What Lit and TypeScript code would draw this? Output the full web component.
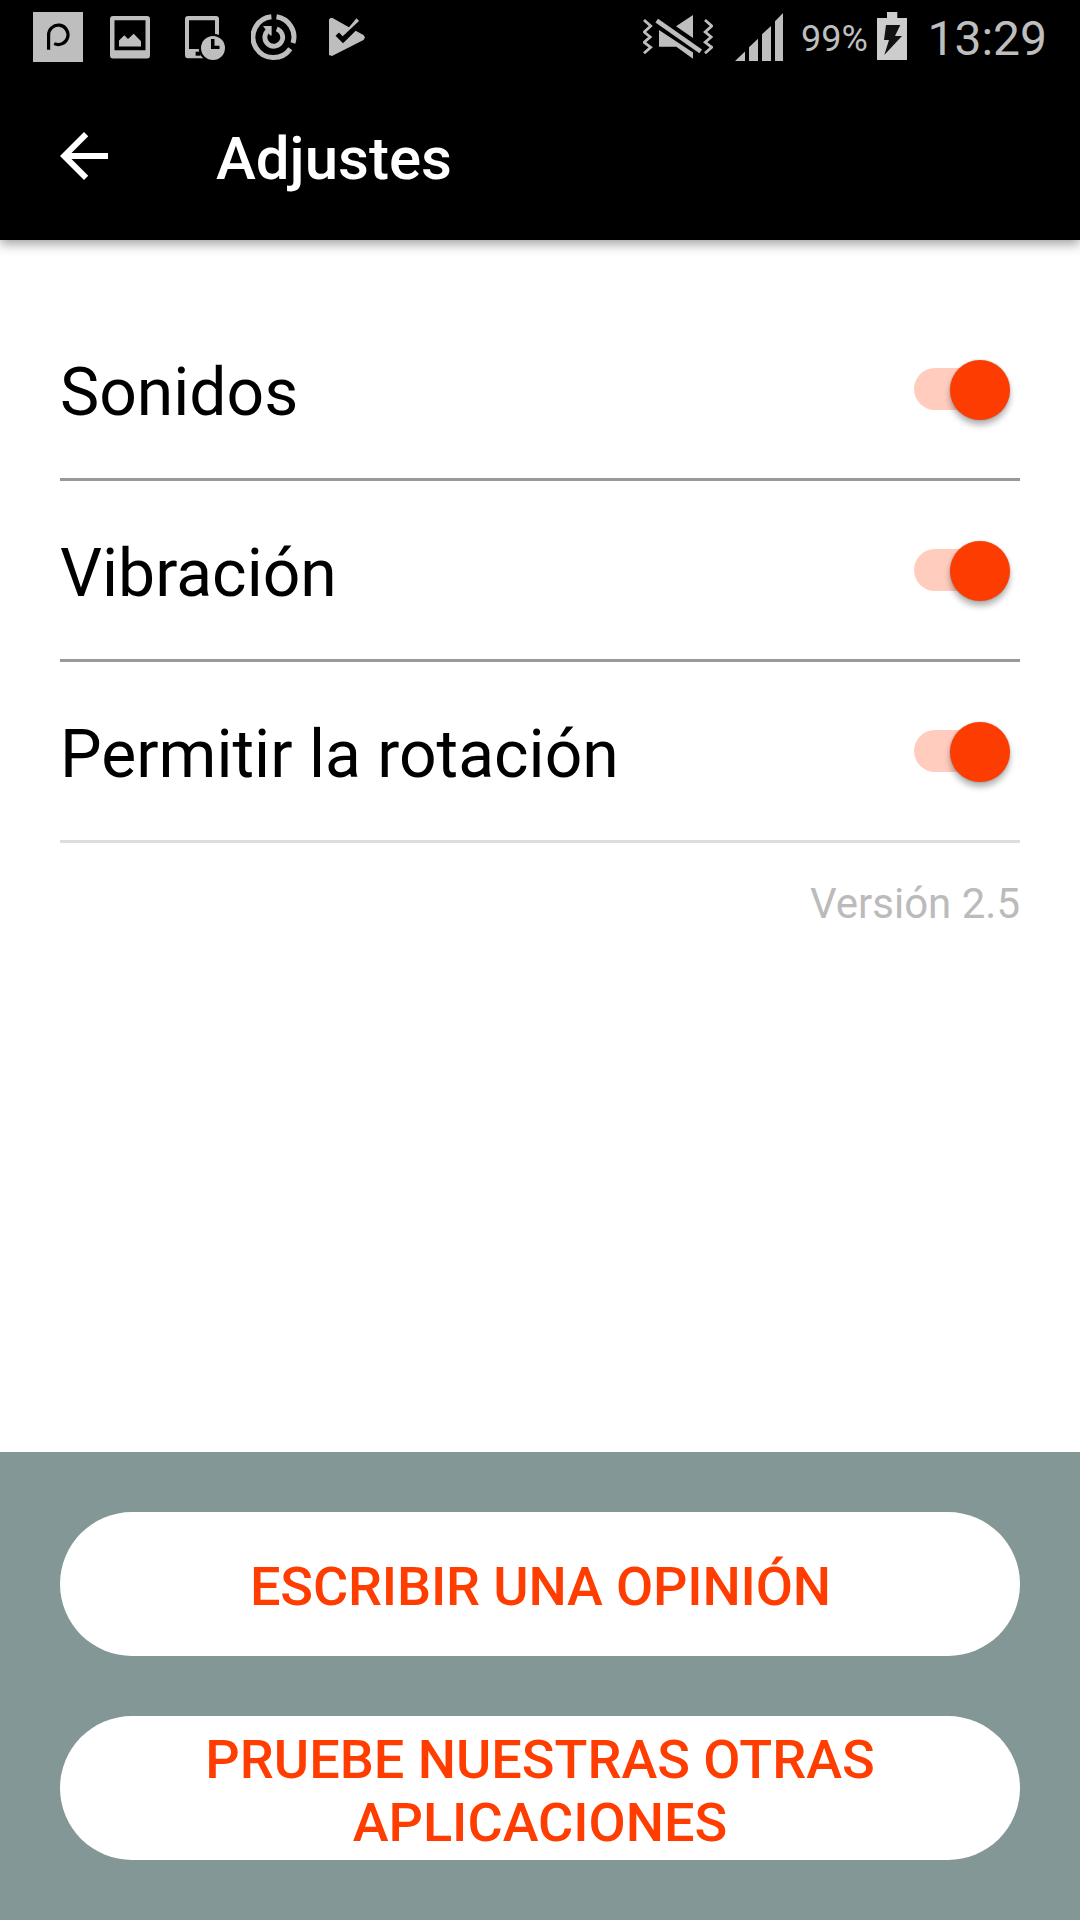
import { LitElement, html, css } from "lit";
import { customElement, property, state } from "lit/decorators.js";

@customElement("status-bar")
class StatusBar extends LitElement {
  static styles = css`
    :host { display: block; height: 75px; color: #bebebe; }
    .bar { display: flex; height: 75px; justify-content: space-between; padding: 0 33px; box-sizing: border-box; }
    .group { display: flex; align-items: flex-start; }
    svg { display: block; height: 75px; fill: #bebebe; flex: none; }
    .picture { margin-left: 27px; }
    .device { margin-left: 35px; }
    .power { margin-left: 26px; }
    .play { margin-left: 31px; }
    .signal { margin-left: 19px; }
    .percent { font-size: 36px; line-height: 42px; margin: 18px 0 0 18px; width: 67px; }
    .battery { margin-left: 9px; fill: #cdcdcd; }
    .clock { font-size: 48px; line-height: 56px; margin: 11px 0 0 20.5px; }
    .line { fill: none; stroke: #bebebe; }
    .dark { fill: #000; }
    .ink { fill: none; stroke: #000; }
    .bolt { fill: #111; }
  `;

  render() {
    return html`
      <div class="bar">
        <div class="group">
          <svg width="50" viewBox="33 0 50 75">
            <path d="M33 12h50v50H33z" />
            <path class="ink" stroke-width="3.2" d="M48.6 49.8V35a9.7 9.7 0 1 1 5.6 8.6" />
          </svg>
          <svg class="picture" width="40" viewBox="110 0 40 75">
            <path fill-rule="evenodd" d="M113 16h34a3 3 0 0 1 3 3v36.500a3 3 0 0 1-3 3h-34a3 3 0 0 1-3-3V19a3 3 0 0 1 3-3zM114.500 20.300v30h31v-30z" />
            <path d="M119 46.600v-6l5.300-5.300 3.700 3.700 5.700-5.300 7.300 7.600v5.300z" />
          </svg>
          <svg class="device" width="40" viewBox="185 0 40 75">
            <path fill-rule="evenodd" d="M188 16h28a3 3 0 0 1 3 3v36.300a3 3 0 0 1-3 3h-28a3 3 0 0 1-3-3V19a3 3 0 0 1 3-3zM189 20.300v28.700h26V20.300z" />
            <circle class="dark" cx="213" cy="48" r="14.300" />
            <path class="dark" d="M195.600 51.700h5v4h-5z" />
            <circle cx="213" cy="48" r="12" />
            <path class="dark" d="M211 39h3.500v6.700h5V49H211z" />
          </svg>
          <svg class="power" width="47" viewBox="251 0 47 75">
            <path class="line" stroke-width="5" d="M276.500 16.700a20.500 20.500 0 0 1 16.500 26.300M290.300 48.800a20.500 20.500 0 1 1-18.900-32.100" />
            <path class="line" stroke-width="4.800" d="M276.700 28.900a8.900 8.900 0 1 1-9.200 2.100" />
            <path d="M263 26h8.600v9.500h-1.500z" />
          </svg>
          <svg class="play" width="36" viewBox="329 0 36 75">
            <path d="M329 19.500l1.500-1.500h2l16.500 9.200 7.500-8.900 2.500 2.700-16.300 15.200-3.700-3.700-3.500 3.200 7.500 7.600 12.700-12.600 7.800 4.300 1.500 2.500-1.500 2.500L332 56l-3-1z" />
          </svg>
        </div>
        <div class="group">
          <svg width="70" viewBox="643 0 70 75">
            <path class="line" stroke-width="2.800" d="M644 20l6.700 6-6.500 6 6 5-6 5.300 6.500 5-6.700 6M705 20l6.700 6-6.500 6 6 5-6 5.300 6.500 5-6.700 6" />
            <path class="line" stroke-width="4.600" d="M656.700 20.700l44 30.600" />
            <path d="M676 26.300L693 15v23zM659 30v16.700h17.300l16.700 12v-6.200z" />
          </svg>
          <svg class="signal" width="51" viewBox="732 0 51 75">
            <path d="M735 61l10-9.500V61zM749 61V47.300l9-8.600V61zM762 61V34.300l9-8.300v35zM775 61V21.300l8-8.300v48z" />
          </svg>
          <span class="percent">99%</span>
          <svg class="battery" width="30" viewBox="877 0 30 75">
            <path d="M877 18h10v-6h10.300v6H907v42h-30z" />
            <path class="bolt" d="M886 25h14.300L895 36h7l-17.700 19L889 40h-5z" />
          </svg>
          <span class="clock">13:29</span>
        </div>
      </div>
    `;
  }
}

@customElement("toggle-switch")
class ToggleSwitch extends LitElement {
  @property({ type: Boolean, reflect: true }) on = false;

  static styles = css`
    :host { display: block; margin: 1px 10.5px 0 0; }
    .rail { width: 95.5px; height: 60px; display: grid; align-items: center; }
    .groove { grid-area: 1 / 1; width: 86px; height: 42px; margin-bottom: 1px; border-radius: 21px; background: #ffccbe; }
    .knob { grid-area: 1 / 1; width: 60px; height: 60px; border-radius: 50%; background: #bbb; box-shadow: 0 5px 6px rgba(0, 0, 0, 0.3), 0 0 2px rgba(0, 0, 0, 0.24); }
    .active .knob { justify-self: end; background: #fc3c00; }
  `;

  render() {
    return html`<div class="rail ${this.on ? "active" : ""}">
      <div class="groove"></div>
      <div class="knob"></div>
    </div>`;
  }
}

@customElement("app-root")
class AppRoot extends LitElement {
  @state() private settings = [
    { label: "Sonidos", on: true },
    { label: "Vibración", on: true },
    { label: "Permitir la rotación", on: true },
  ];

  static styles = css`
    :host { display: flex; flex-direction: column; width: 1080px; height: 1920px; background: #fff; font-family: Roboto, sans-serif; overflow: hidden; }
    .header { height: 240px; background: #000; box-shadow: 0 4px 11px rgba(0, 0, 0, 0.38); flex: none; }
    .toolbar { display: flex; align-items: center; height: 162px; padding-left: 48px; }
    .back { width: 72px; height: 72px; fill: #fff; display: block; }
    .title { margin: 6px 0 0 96px; color: #fff; font-size: 60px; line-height: 70px; font-weight: 500; }
    .content { flex: 1; padding: 60px 60px 0; }
    .row { display: flex; align-items: center; justify-content: space-between; height: 178px; border-bottom: 3px solid #999; }
    .row:last-of-type { border-bottom-color: #ddd; }
    .label { font-size: 66px; line-height: 78px; color: #000; padding-top: 7px; }
    .version { margin: 0; padding-top: 36px; font-size: 42px; line-height: 49px; color: #bbb; text-align: right; }
    .actions { display: flex; flex-direction: column; gap: 60px; height: 468px; box-sizing: border-box; padding: 60px; background: #839896; }
    .pill { height: 144px; flex: none; border: 0; border-radius: 72px; background: #fff; color: #ff3d00; font: 500 54px/63px Roboto, sans-serif; padding: 5px 100px 0; text-transform: uppercase; }
    .review { letter-spacing: -0.15px; padding-left: 101px; }
  `;

  render() {
    return html`
      <div class="header">
        <status-bar></status-bar>
        <div class="toolbar">
          <svg class="back" viewBox="0 0 24 24"><path d="M20 11H7.830l5.590-5.590L12 4l-8 8 8 8 1.410-1.410L7.830 13H20v-2z" /></svg>
          <span class="title">Adjustes</span>
        </div>
      </div>
      <div class="content">
        ${this.settings.map(
          (s) => html`<div class="row"><span class="label">${s.label}</span><toggle-switch ?on=${s.on}></toggle-switch></div>`
        )}
        <p class="version">Versión 2.5</p>
      </div>
      <div class="actions">
        <button class="pill review">Escribir una opinión</button>
        <button class="pill">Pruebe nuestras otras aplicaciones</button>
      </div>
    `;
  }
}
